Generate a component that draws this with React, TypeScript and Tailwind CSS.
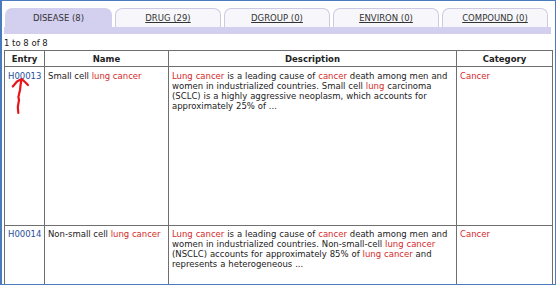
import React from 'react';

const red = 'text-[#d42a2a]';

function R({ children }: { children: React.ReactNode }) {
  return <span className={red}>{children}</span>;
}

const tabs = ['DISEASE (8)', 'DRUG (29)', 'DGROUP (0)', 'ENVIRON (0)', 'COMPOUND (0)'];

export default function App() {
  return (
    <div className="relative w-[556px] h-[285px] overflow-hidden bg-white border border-l-2 border-[#4a7cbd] font-['DejaVu_Sans',sans-serif] text-[8.5px] leading-[10px] text-[#222]">
      <div className="pl-[2px] pr-[2px] pt-[7px]">
        {/* tab strip */}
        <div className="flex gap-[3px] pl-[1px] h-[19px]">
          {tabs.map((t, i) =>
            i === 0 ? (
              <div key={t} className="w-[107px] h-full bg-[#d3cfee] rounded-t-[7px] flex items-center justify-center text-[#333]">
                {t}
              </div>
            ) : (
              <div key={t} className="w-[106px] h-full bg-[#f7f7fb] border border-b-0 border-[#cdc9e4] rounded-t-[7px] flex items-center justify-center">
                <span className="underline text-[#333]">{t}</span>
              </div>
            )
          )}
        </div>
        <div className="h-[7px] w-[547px] bg-[#d3cfee]" />
        <div className="pt-[4px] h-[16px]">1 to 8 of 8</div>
        <table className="w-[549px] border-collapse table-fixed">
          <colgroup>
            <col className="w-[40px]" />
            <col className="w-[124px]" />
            <col className="w-[288px]" />
            <col />
          </colgroup>
          <thead>
            <tr className="h-[16px]">
              {['Entry', 'Name', 'Description', 'Category'].map((h) => (
                <th key={h} className="border border-[#6f6f6f] font-bold text-center align-middle">
                  {h}
                </th>
              ))}
            </tr>
          </thead>
          <tbody>
            <tr className="h-[159px]">
              <td className="border border-[#6f6f6f] align-top px-[3px] pt-[4px] text-[#1f4f9e]">H00013</td>
              <td className="border border-[#6f6f6f] align-top px-[3px] pt-[4px]">
                Small cell <R>lung cancer</R>
              </td>
              <td className="border border-[#6f6f6f] align-top px-[3px] pt-[4px] [word-spacing:0.2px] whitespace-nowrap">
                <R>Lung cancer</R> is a leading cause of <R>cancer</R> death among men and
                <br />
                women in industrialized countries. Small cell <R>lung</R> carcinoma
                <br />
                (SCLC) is a highly aggressive neoplasm, which accounts for
                <br />
                approximately 25% of ...
              </td>
              <td className="border border-[#6f6f6f] align-top px-[3px] pt-[4px]">
                <R>Cancer</R>
              </td>
            </tr>
            <tr className="h-[70px]">
              <td className="border border-[#6f6f6f] align-top px-[3px] pt-[3px] text-[#1f4f9e]">H00014</td>
              <td className="border border-[#6f6f6f] align-top px-[3px] pt-[3px] whitespace-nowrap">
                Non-small cell <R>lung cancer</R>
              </td>
              <td className="border border-[#6f6f6f] align-top px-[3px] pt-[3px] [word-spacing:0.2px] whitespace-nowrap">
                <R>Lung cancer</R> is a leading cause of <R>cancer</R> death among men and
                <br />
                women in industrialized countries. Non-small-cell <R>lung cancer</R>
                <br />
                (NSCLC) accounts for approximately 85% of <R>lung cancer</R> and
                <br />
                represents a heterogeneous ...
              </td>
              <td className="border border-[#6f6f6f] align-top px-[3px] pt-[3px]">
                <R>Cancer</R>
              </td>
            </tr>
          </tbody>
        </table>
      </div>
      {/* hand-drawn red arrow */}
      <svg className="absolute -left-[2px] -top-[1px] pointer-events-none" width="40" height="120" viewBox="0 0 40 120">
        <path
          d="M21.5 80 L20.7 84 L20 90 L18.4 97 L19 100 L17.8 107 L18.3 113"
          fill="none"
          stroke="#e8141a"
          strokeWidth="2.2"
          strokeLinecap="round"
          strokeLinejoin="round"
        />
        <path
          d="M12.8 86.5 L17 81.5 L21.7 79 L25 82 L28 85"
          fill="none"
          stroke="#e8141a"
          strokeWidth="2.2"
          strokeLinecap="round"
          strokeLinejoin="round"
        />
      </svg>
    </div>
  );
}
